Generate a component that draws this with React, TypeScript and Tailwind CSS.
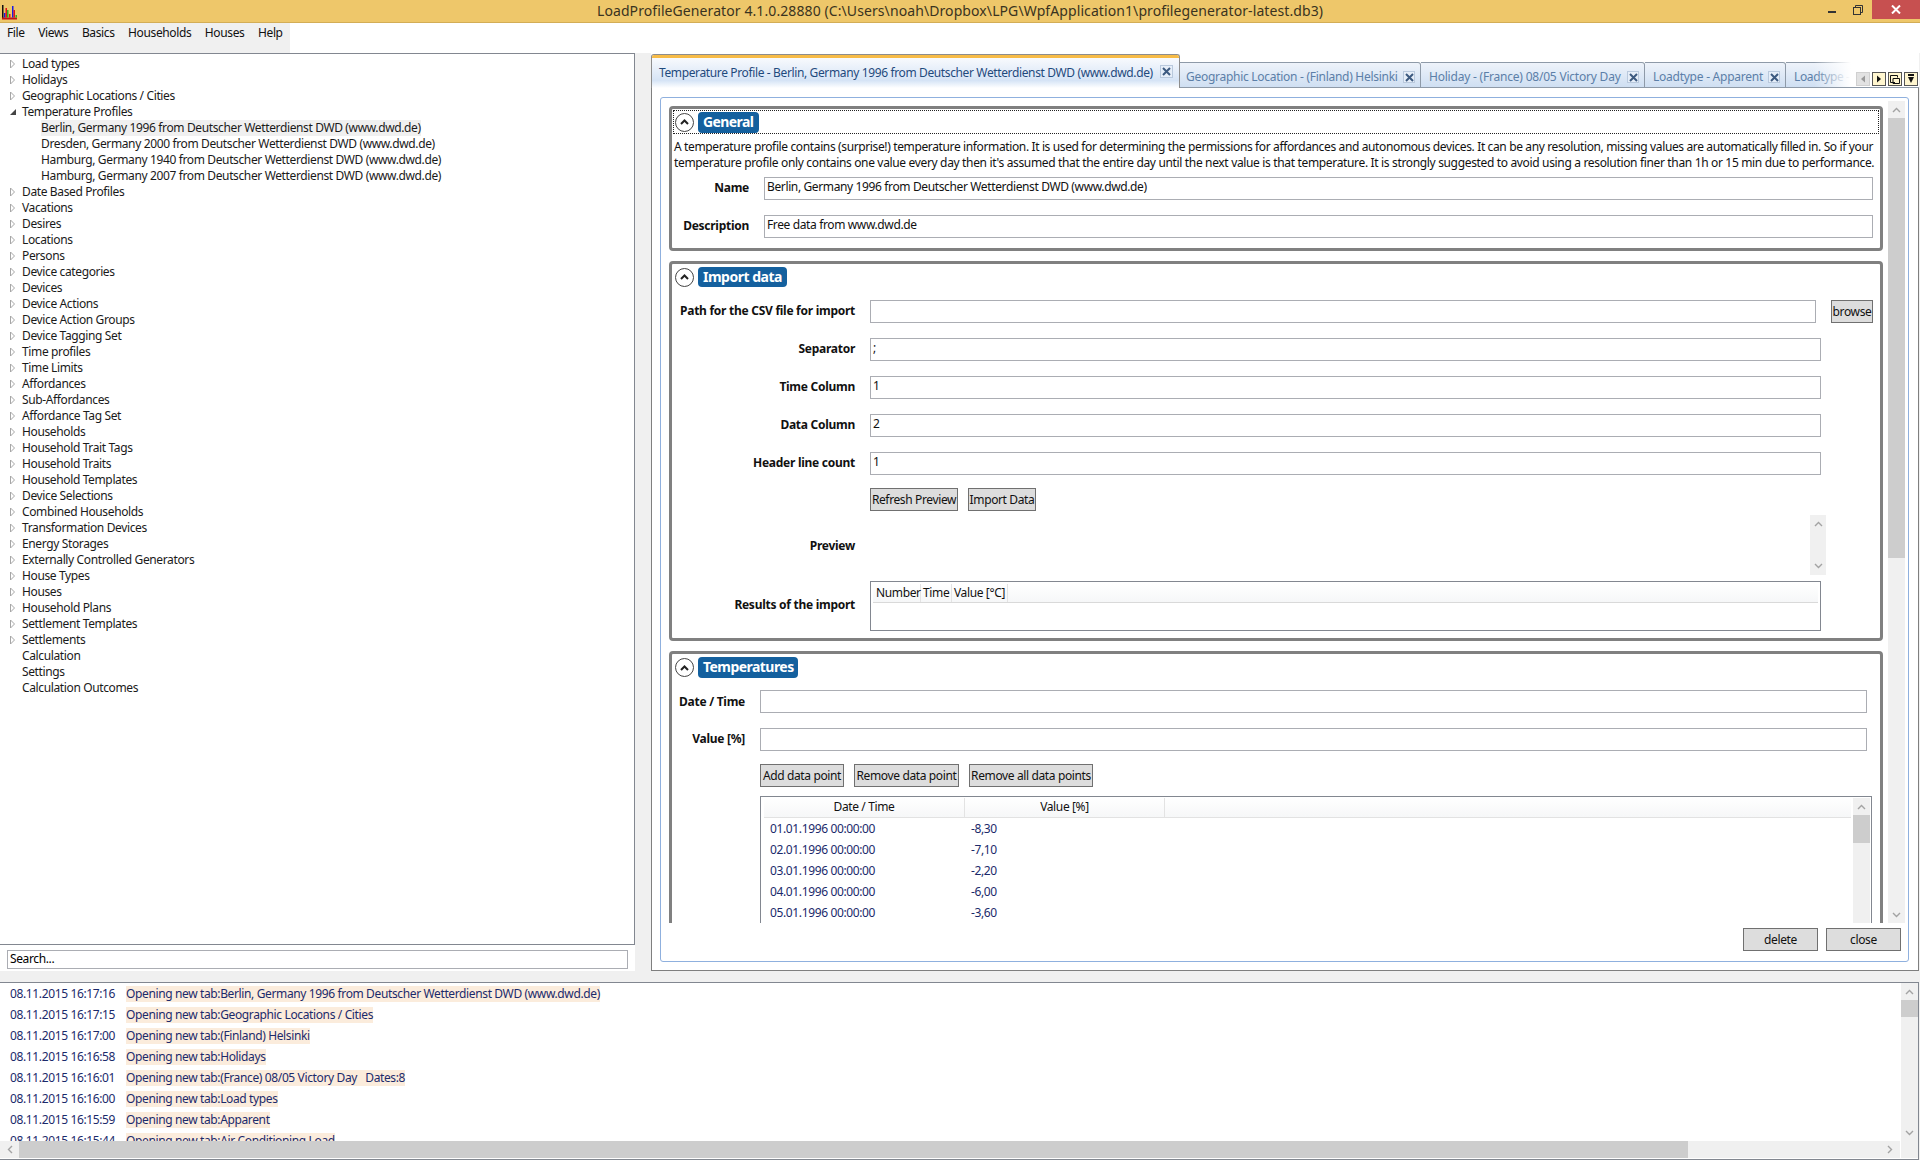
import type { ReactNode } from "react";

const treeTop = ["Load types", "Holidays", "Geographic Locations / Cities"];
const profiles = [
  "Berlin, Germany 1996 from Deutscher Wetterdienst DWD (www.dwd.de)",
  "Dresden, Germany 2000 from Deutscher Wetterdienst DWD (www.dwd.de)",
  "Hamburg, Germany 1940 from Deutscher Wetterdienst DWD (www.dwd.de)",
  "Hamburg, Germany 2007 from Deutscher Wetterdienst DWD (www.dwd.de)",
];
const treeRest = [
  "Date Based Profiles", "Vacations", "Desires", "Locations", "Persons", "Device categories", "Devices",
  "Device Actions", "Device Action Groups", "Device Tagging Set", "Time profiles", "Time Limits", "Affordances",
  "Sub-Affordances", "Affordance Tag Set", "Households", "Household Trait Tags", "Household Traits",
  "Household Templates", "Device Selections", "Combined Households", "Transformation Devices", "Energy Storages",
  "Externally Controlled Generators", "House Types", "Houses", "Household Plans", "Settlement Templates", "Settlements",
];
const treeEnd = ["Calculation", "Settings", "Calculation Outcomes"];

const points = [
  ["01.01.1996 00:00:00", "-8,30"],
  ["02.01.1996 00:00:00", "-7,10"],
  ["03.01.1996 00:00:00", "-2,20"],
  ["04.01.1996 00:00:00", "-6,00"],
  ["05.01.1996 00:00:00", "-3,60"],
];

const logRows = [
  ["08.11.2015 16:17:16", "Opening new tab:Berlin, Germany 1996 from Deutscher Wetterdienst DWD (www.dwd.de)"],
  ["08.11.2015 16:17:15", "Opening new tab:Geographic Locations / Cities"],
  ["08.11.2015 16:17:00", "Opening new tab:(Finland) Helsinki"],
  ["08.11.2015 16:16:58", "Opening new tab:Holidays"],
  ["08.11.2015 16:16:01", "Opening new tab:(France) 08/05 Victory Day   Dates:8"],
  ["08.11.2015 16:16:00", "Opening new tab:Load types"],
  ["08.11.2015 16:15:59", "Opening new tab:Apparent"],
  ["08.11.2015 16:15:44", "Opening new tab:Air Conditioning Load"],
];

function AppIcon() {
  return (
    <svg width="18" height="18" viewBox="0 0 18 18" className="ml-[1px]">
      <rect x="1" y="3" width="1.5" height="14" fill="#111" />
      <rect x="1" y="15.5" width="15" height="2" fill="#c01515" />
      <rect x="3" y="11" width="1.5" height="4.5" fill="#1a1ae0" />
      <rect x="4.5" y="6" width="1.5" height="9.5" fill="#e01515" />
      <rect x="6" y="8" width="1.5" height="7.5" fill="#25b825" />
      <rect x="8" y="12" width="1.5" height="3.5" fill="#e01515" />
      <rect x="11" y="4" width="1.5" height="11.5" fill="#1a1ae0" />
      <rect x="12.5" y="8" width="1.5" height="7.5" fill="#e01515" />
      <rect x="14.5" y="13" width="1.5" height="2.5" fill="#25b825" />
    </svg>
  );
}

function TitleBar() {
  return (
    <div className="h-[23px] shrink-0 grid grid-cols-[1fr_auto_1fr] bg-[#eec76a] border-b border-[#d3ad56]">
      <div className="flex items-start pt-[2px]">
        <AppIcon />
      </div>
      <div className="text-[14px] leading-[22px] text-[#3a3320] tracking-[0.09px] whitespace-nowrap">
        LoadProfileGenerator 4.1.0.28880 (C:\Users\noah\Dropbox\LPG\WpfApplication1\profilegenerator-latest.db3)
      </div>
      <div className="flex justify-end items-start">
        <div className="w-[8px] h-[2px] mt-[11px] bg-[#333] mr-[17px]" />
        <svg width="10" height="10" viewBox="0 0 10 10" className="mt-[5px] mr-[9px]" fill="none" stroke="#333">
          <rect x="0.5" y="2.5" width="7" height="7" />
          <path d="M2.5 2.5V0.5H9.5V7.5H7.5" />
        </svg>
        <div className="w-[48px] h-[19px] bg-[#c75050] flex items-center justify-center">
          <svg width="10" height="9" viewBox="0 0 10 9" stroke="#fff" strokeWidth="2">
            <path d="M1 0.5L9 8.5M9 0.5L1 8.5" />
          </svg>
        </div>
      </div>
    </div>
  );
}

function MenuBar() {
  return (
    <div className="h-[30px] shrink-0 bg-white">
      <div className="w-[290px] h-full bg-[#f0f0f0] flex gap-[13.5px] pl-[7px] leading-[20px] text-[#111]">
        {["File", "Views", "Basics", "Households", "Houses", "Help"].map((m) => (
          <span key={m}>{m}</span>
        ))}
      </div>
    </div>
  );
}

function TreeArrow({ open }: { open?: boolean }) {
  return (
    <svg width="8" height="10" viewBox="0 0 8 10" className="ml-[9px] mr-[5px] shrink-0">
      {open ? <path d="M1 8L7 8L7 2Z" fill="#444" /> : <path d="M1.5 1L5.5 5L1.5 9Z" fill="#fff" stroke="#a6a6a6" />}
    </svg>
  );
}

function TreeRow({ label, open }: { label: string; open?: boolean }) {
  return (
    <div className="h-[16px] flex items-center whitespace-nowrap">
      <TreeArrow open={open} />
      <span>{label}</span>
    </div>
  );
}

function LeftPane() {
  return (
    <div className="w-[635px] shrink-0 bg-white flex flex-col">
      <div className="h-[892px] border border-l-0 border-[#828790] pt-[2px] text-[#1a1a1a] overflow-hidden">
        {treeTop.map((t) => (
          <TreeRow key={t} label={t} />
        ))}
        <TreeRow label="Temperature Profiles" open />
        {profiles.map((p, i) => (
          <div key={p} className="h-[16px] pl-[41px] flex whitespace-nowrap">
            <span className={i === 0 ? "bg-[#f0f0f0] h-[16px] leading-[16px]" : "leading-[16px]"}>{p}</span>
          </div>
        ))}
        {treeRest.map((t) => (
          <TreeRow key={t} label={t} />
        ))}
        {treeEnd.map((t) => (
          <div key={t} className="h-[16px] pl-[22px] leading-[16px]">
            {t}
          </div>
        ))}
      </div>
      <div className="mt-[5px] mx-[7px] h-[19px] border border-[#abadb3] pl-[2px] leading-[15px]">Search...</div>
    </div>
  );
}

function CloseBox({ active }: { active?: boolean }) {
  return (
    <div
      className={
        active
          ? "w-[13px] h-[13px] shrink-0 border border-[#b9c9dd] bg-[#e6eef8] flex items-center justify-center"
          : "w-[12px] h-[12px] shrink-0 border border-[#b9c9dd] bg-[#e6eef8] flex items-center justify-center"
      }
    >
      <svg width="9" height="9" viewBox="0 0 9 9" stroke="#3d5a80" strokeWidth="2">
        <path d="M1 1L8 8M8 1L1 8" />
      </svg>
    </div>
  );
}

function TabStrip() {
  return (
    <div className="relative h-[35px] shrink-0 bg-white flex items-end">
      <div className="w-[529px] h-[34px] shrink-0 border border-b-0 border-[#8d8d8d] rounded-t-[3px] flex flex-col">
        <div className="h-[3px] bg-[#f7bb46] rounded-t-[2px]" />
        <div className="flex-1 flex items-start pl-[7px] pr-[6px] pt-[5px] bg-linear-to-b from-[#f8fafd] via-[#d6e4f6] via-[75%] to-white">
          <span className="flex-1 whitespace-nowrap leading-[20px] text-[#1f4a7d]">
            Temperature Profile - Berlin, Germany 1996 from Deutscher Wetterdienst DWD (www.dwd.de)
          </span>
          <div className="mt-[2px]">
            <CloseBox active />
          </div>
        </div>
      </div>
      <div className="w-[241px] h-[26px] shrink-0 border-t border-r border-b border-[#8e9aa8] rounded-tr-[3px] flex items-start pl-[6px] pr-[5px] pt-[5px] bg-linear-to-b from-[#eef3fa] to-[#cfdff2]">
        <span className="flex-1 whitespace-nowrap leading-[18px] tracking-[-0.28px] text-[#5c7fa8]">Geographic Location - (Finland) Helsinki</span>
        <div className="mt-[3px]">
          <CloseBox />
        </div>
      </div>
      <div className="w-[224px] h-[26px] shrink-0 border-t border-r border-b border-[#8e9aa8] rounded-tr-[3px] flex items-start pl-[8px] pr-[5px] pt-[5px] bg-linear-to-b from-[#eef3fa] to-[#cfdff2]">
        <span className="flex-1 whitespace-nowrap leading-[18px] tracking-[-0.21px] text-[#5c7fa8]">Holiday - (France) 08/05 Victory Day</span>
        <div className="mt-[3px]">
          <CloseBox />
        </div>
      </div>
      <div className="w-[141px] h-[26px] shrink-0 border-t border-r border-b border-[#8e9aa8] rounded-tr-[3px] flex items-start pl-[8px] pr-[5px] pt-[5px] bg-linear-to-b from-[#eef3fa] to-[#cfdff2]">
        <span className="flex-1 whitespace-nowrap leading-[18px] tracking-[-0.25px] text-[#5c7fa8]">Loadtype - Apparent</span>
        <div className="mt-[3px]">
          <CloseBox />
        </div>
      </div>
      <div className="w-[133px] h-[26px] shrink-0 border-t border-b border-[#8e9aa8] flex items-start pl-[8px] pt-[5px] bg-linear-to-b from-[#eef3fa] to-[#cfdff2] overflow-hidden">
        <span className="whitespace-nowrap leading-[18px] text-[#5c7fa8]">Loadtype - Air</span>
      </div>
      {/* fade over the clipped last tab, scroll buttons sit on it */}
      <div className="absolute right-0 top-0 bottom-[1px] w-[105px] bg-linear-to-r from-transparent via-white via-[35%] to-white" />
      <div className="absolute right-[1px] top-[19px] flex gap-[2px]">
        <div className="w-[14px] h-[14px] bg-[#e2e2e2] border border-[#d0d0d0] flex items-center justify-center">
          <svg width="6" height="8" viewBox="0 0 6 8"><path d="M5 0.5V7.5L1 4Z" fill="#9a9a9a" /></svg>
        </div>
        <div className="w-[14px] h-[14px] bg-[#fff6cf] border border-[#555] flex items-center justify-center">
          <svg width="6" height="8" viewBox="0 0 6 8"><path d="M1 0.5V7.5L5 4Z" fill="#111" /></svg>
        </div>
        <div className="w-[14px] h-[14px] bg-[#fff6cf] border border-[#555] flex items-center justify-center">
          <svg width="10" height="9" viewBox="0 0 10 9" fill="none" stroke="#111">
            <path d="M0.5 0.5H7.5V2.5M0.5 0.5V7.5H5" />
            <path d="M3 3.5H9.5V8.5H3Z" />
          </svg>
        </div>
        <div className="w-[14px] h-[14px] bg-[#fff6cf] border border-[#555] flex items-center justify-center">
          <svg width="8" height="10" viewBox="0 0 8 10" fill="#111">
            <rect x="1" y="0" width="6" height="2" />
            <path d="M1 3H7L4 9Z" />
          </svg>
        </div>
      </div>
    </div>
  );
}

function Chevron({ down }: { down?: boolean }) {
  return (
    <svg width="9" height="6" viewBox="0 0 9 6" fill="none" stroke="#a3a3a3" strokeWidth="1.4">
      <path d={down ? "M1 1L4.5 4.5L8 1" : "M1 5L4.5 1.5L8 5"} />
    </svg>
  );
}

function VScroll({ thumb }: { thumb: string }) {
  return (
    <div className="w-[17px] shrink-0 h-full bg-[#f0f0f0] flex flex-col">
      <div className="h-[17px] shrink-0 flex items-center justify-center">
        <Chevron />
      </div>
      <div className={thumb} />
      <div className="flex-1" />
      <div className="h-[17px] shrink-0 flex items-center justify-center">
        <Chevron down />
      </div>
    </div>
  );
}

function GroupHeader({ title, pill }: { title: string; pill: string }) {
  return (
    <div className="flex items-center gap-[4px]">
      <div className="w-[19px] h-[19px] rounded-full border border-[#444] bg-white flex items-center justify-center shrink-0">
        <svg width="9" height="6" viewBox="0 0 9 6" fill="none" stroke="#222" strokeWidth="2">
          <path d="M1 5L4.5 1.5L8 5" />
        </svg>
      </div>
      <div className={pill}>{title}</div>
    </div>
  );
}

function Field({ children, className }: { children?: ReactNode; className: string }) {
  return <div className={"h-[23px] border border-[#abadb3] bg-white pl-[2px] leading-[18px] text-[#111] whitespace-nowrap " + className}>{children}</div>;
}

function Btn({ children, className }: { children: ReactNode; className: string }) {
  return (
    <div className={"h-[23px] bg-[#dddddd] border border-[#707070] flex items-center justify-center whitespace-nowrap text-[#111] " + className}>
      {children}
    </div>
  );
}

function Label({ children, className }: { children: ReactNode; className: string }) {
  return <div className={"shrink-0 text-right font-bold leading-[16px] tracking-[-0.27px] whitespace-nowrap text-[#111] " + className}>{children}</div>;
}

function GeneralGroup() {
  return (
    <div className="h-[145px] shrink-0 border-[3px] border-[#808080] rounded-[4px] pt-[1px]">
      <div className="mx-[1px] h-[24px] border border-dotted border-[#222] flex items-center pl-[1px]">
        <GroupHeader title="General" pill="w-[61px] h-[21px] rounded-[4px] bg-[#14609e] text-white font-bold text-[14px] leading-[20px] tracking-[-0.6px] pl-[5px]" />
      </div>
      <div className="mt-[5px] px-[2px] leading-[16px] whitespace-nowrap text-[#111]">
        <div>
          A temperature profile contains (surprise!) temperature information. It is used for determining the permissions for affordances and autonomous devices. It can be any resolution, missing values are automatically filled in. So if your
        </div>
        <div className="tracking-[-0.34px]">
          temperature profile only contains one value every day then it's assumed that the entire day until the next value is that temperature. It is strongly suggested to avoid using a resolution finer than 1h or 15 min due to performance.
        </div>
      </div>
      <div className="mt-[6px] flex items-center gap-[15px]">
        <Label className="w-[77px] pb-[2px]">Name</Label>
        <Field className="w-[1109px]">Berlin, Germany 1996 from Deutscher Wetterdienst DWD (www.dwd.de)</Field>
      </div>
      <div className="mt-[15px] flex items-center gap-[15px]">
        <Label className="w-[77px] pb-[2px]">Description</Label>
        <Field className="w-[1109px]">Free data from www.dwd.de</Field>
      </div>
    </div>
  );
}

function ImportGroup() {
  return (
    <div className="h-[380px] shrink-0 mt-[10px] border-[3px] border-[#808080] rounded-[4px] pt-[3px]">
      <div className="pl-[3px]">
        <GroupHeader title="Import data" pill="w-[89px] h-[20px] rounded-[4px] bg-[#14609e] text-white font-bold text-[14px] leading-[19px] tracking-[-0.5px] pl-[5px]" />
      </div>
      <div className="mt-[13px] flex items-center gap-[15px]">
        <Label className="w-[183px] pb-[2px]">Path for the CSV file for import</Label>
        <Field className="w-[946px]" />
        <Btn className="w-[42px]">browse</Btn>
      </div>
      {[
        ["Separator", ";"],
        ["Time Column", "1"],
        ["Data Column", "2"],
        ["Header line count", "1"],
      ].map(([label, value]) => (
        <div key={label} className="mt-[15px] flex items-center gap-[15px]">
          <Label className="w-[183px] pb-[2px]">{label}</Label>
          <Field className="w-[951px]">{value}</Field>
        </div>
      ))}
      <div className="mt-[13px] pl-[198px] flex gap-[10px]">
        <Btn className="w-[88px]">Refresh Preview</Btn>
        <Btn className="w-[68px]">Import Data</Btn>
      </div>
      <div className="mt-[4px] h-[60px] flex items-center gap-[15px]">
        <Label className="w-[183px] pt-[1px]">Preview</Label>
        <div className="ml-[940px] w-[16px] h-full bg-[#f0f0f0] flex flex-col justify-between items-center py-[6px]">
          <Chevron />
          <Chevron down />
        </div>
      </div>
      <div className="mt-[6px] flex items-center gap-[15px]">
        <Label className="w-[183px] pb-[2px]">Results of the import</Label>
        <div className="w-[951px] h-[50px] border border-[#828790] px-[2px] pt-[2px]">
          <div className="h-[19px] flex border-b border-[#d9d9d9] bg-linear-to-b from-white to-[#f6f7f8] leading-[18px] text-[#111]">
            <div className="w-[48px] pl-[3px] border-r border-[#e3e3e3]">Number</div>
            <div className="w-[31px] pl-[2px] border-r border-[#e3e3e3]">Time</div>
            <div className="w-[56px] pl-[2px] border-r border-[#e3e3e3]">Value [°C]</div>
          </div>
        </div>
      </div>
    </div>
  );
}

function TemperatureGroup() {
  return (
    <div className="h-[320px] shrink-0 mt-[10px] border-[3px] border-[#808080] rounded-[4px] pt-[3px]">
      <div className="pl-[3px]">
        <GroupHeader title="Temperatures" pill="w-[100px] h-[21px] rounded-[4px] bg-[#14609e] text-white font-bold text-[14px] leading-[20px] tracking-[-0.55px] pl-[5px]" />
      </div>
      <div className="mt-[12px] flex items-center gap-[15px]">
        <Label className="w-[73px]">Date / Time</Label>
        <Field className="w-[1107px]" />
      </div>
      <div className="mt-[15px] flex items-center gap-[15px]">
        <Label className="w-[73px] pb-[2px]">Value [%]</Label>
        <Field className="w-[1107px]" />
      </div>
      <div className="mt-[13px] pl-[88px] flex gap-[10px]">
        <Btn className="w-[84px]">Add data point</Btn>
        <Btn className="w-[105px]">Remove data point</Btn>
        <Btn className="w-[124px]">Remove all data points</Btn>
      </div>
      <div className="mt-[9px] ml-[88px] w-[1112px] h-[180px] border border-[#828790] pl-[3px] pt-[1px] flex text-[#1b2a6b]">
        <div className="flex-1">
          <div className="h-[20px] flex border-b border-[#e2e2e2] bg-linear-to-b from-white to-[#f6f7f8] leading-[18px] text-[#111] text-center">
            <div className="w-[201px] border-r border-[#e3e3e3]">Date / Time</div>
            <div className="w-[200px] border-r border-[#e3e3e3]">Value [%]</div>
          </div>
          {points.map(([d, v]) => (
            <div key={d} className="h-[21px] flex leading-[21px]">
              <div className="w-[201px] pl-[6px]">{d}</div>
              <div className="pl-[6px]">{v}</div>
            </div>
          ))}
        </div>
        <div className="ml-[2px] mr-[1px] h-full">
          <VScroll thumb="h-[28px] shrink-0 bg-[#cdcdcd]" />
        </div>
      </div>
    </div>
  );
}

function RightPane() {
  return (
    <div className="ml-[16px] w-[1268px] shrink-0 flex flex-col">
      <TabStrip />
      <div className="flex-1 bg-white border-x border-b border-[#7f7f7f] pl-[8px] pr-[9px] pt-[9px] pb-[8px]">
        <div className="h-full border border-[#8fb0de] rounded-[3px] flex flex-col">
          <div className="h-[825px] shrink-0 flex gap-[5px] pl-[8px] pr-[3px] overflow-hidden">
            <div className="w-[1214px] shrink-0 pt-[8px] flex flex-col">
              <GeneralGroup />
              <ImportGroup />
              <TemperatureGroup />
            </div>
            <div className="pt-[3px] h-full">
              <VScroll thumb="h-[440px] shrink-0 bg-[#cdcdcd]" />
            </div>
          </div>
          <div className="pt-[5px] pr-[7px] flex justify-end gap-[8px]">
            <Btn className="w-[75px]">delete</Btn>
            <Btn className="w-[75px]">close</Btn>
          </div>
        </div>
      </div>
    </div>
  );
}

function LogPane() {
  return (
    <div className="mt-[11px] h-[178px] w-[1919px] shrink-0 border border-[#828790] border-l-0 bg-white flex flex-col overflow-hidden text-[#1b2a6b]">
      <div className="flex-1 flex min-h-0">
        <div className="flex-1 overflow-hidden">
          {logRows.map(([t, msg]) => (
            <div key={t} className="h-[21px] flex items-center whitespace-pre">
              <span className="w-[126px] pl-[10px] shrink-0">{t}</span>
              <span className="h-[16px] leading-[16px] bg-[#fbecdc]">{msg}</span>
            </div>
          ))}
        </div>
        <VScroll thumb="h-[17px] shrink-0 bg-[#cdcdcd]" />
      </div>
      <div className="h-[17px] shrink-0 mb-[1px] flex bg-[#f0f0f0]">
        <div className="w-[19px] flex items-center justify-center">
          <svg width="6" height="9" viewBox="0 0 6 9" fill="none" stroke="#a3a3a3" strokeWidth="1.4"><path d="M5 1L1.5 4.5L5 8" /></svg>
        </div>
        <div className="w-[1669px] bg-[#cdcdcd]" />
        <div className="flex-1 flex items-center justify-end pr-[3px]">
          <svg width="6" height="9" viewBox="0 0 6 9" fill="none" stroke="#a3a3a3" strokeWidth="1.4"><path d="M1 1L4.5 4.5L1 8" /></svg>
        </div>
        <div className="w-[18px] ml-[4px] border-l border-white" />
      </div>
    </div>
  );
}

export default function App() {
  return (
    <div className="w-[1920px] h-[1160px] flex flex-col overflow-hidden bg-[#f0f0f0] text-[12px] tracking-[-0.37px] font-['Noto_Sans','Liberation_Sans',sans-serif]">
      <TitleBar />
      <MenuBar />
      <div className="h-[918px] shrink-0 flex">
        <LeftPane />
        <RightPane />
      </div>
      <LogPane />
    </div>
  );
}
